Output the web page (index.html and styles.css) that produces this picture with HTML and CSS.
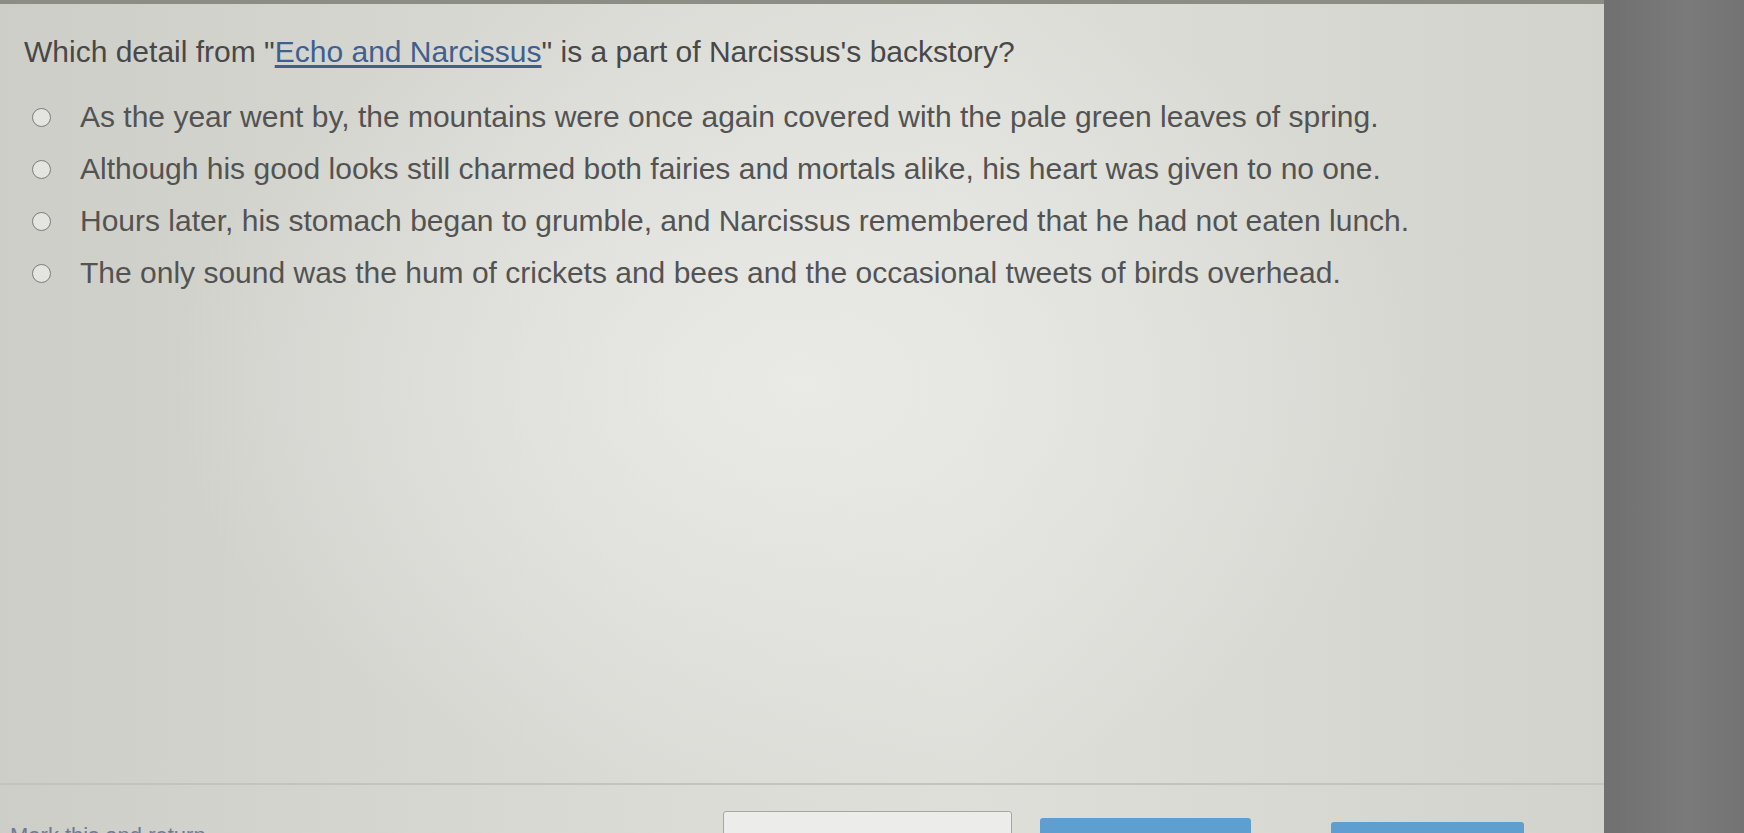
FILE: index.html
```html
<!DOCTYPE html>
<html lang="en">
<head>
<meta charset="utf-8">
<title>Question</title>
<link rel="stylesheet" href="styles.css">
</head>
<body>
<div class="screen">
  <main class="page">
    <section class="question">
      <h1 class="prompt">Which detail from "<a class="story-link" href="#">Echo and Narcissus</a>" is a part of Narcissus's backstory?</h1>
      <ul class="options">
        <li class="option"><span class="radio"></span><span class="option-text">As the year went by, the mountains were once again covered with the pale green leaves of spring.</span></li>
        <li class="option"><span class="radio"></span><span class="option-text">Although his good looks still charmed both fairies and mortals alike, his heart was given to no one.</span></li>
        <li class="option"><span class="radio"></span><span class="option-text">Hours later, his stomach began to grumble, and Narcissus remembered that he had not eaten lunch.</span></li>
        <li class="option"><span class="radio"></span><span class="option-text">The only sound was the hum of crickets and bees and the occasional tweets of birds overhead.</span></li>
      </ul>
    </section>
    <footer class="footer">
      <span class="mark">Mark this and return</span>
      <div class="buttons">
        <button class="btn btn-outline" aria-label="Save and Exit"></button>
        <button class="btn btn-blue" aria-label="Next"></button>
        <button class="btn btn-blue btn-last" aria-label="Submit"></button>
      </div>
    </footer>
  </main>
  <aside class="side"></aside>
</div>
</body>
</html>
```

FILE: styles.css
```css
html, body {
  margin: 0;
  padding: 0;
  height: 100%;
  overflow: hidden;
}
body {
  background: #747474;
  font-family: "Liberation Sans", Arial, sans-serif;
}
.screen {
  display: flex;
  height: 833px;
}
.page {
  width: 1604px;
  flex: none;
  display: flex;
  flex-direction: column;
  border-top: 4px solid #8c8d85;
  box-sizing: border-box;
  background:
    radial-gradient(ellipse 900px 600px at 800px 380px, rgba(236,237,233,0.85), rgba(236,237,233,0) 70%),
    linear-gradient(90deg, #cdcec7 0%, #dadbd5 40%, #dedfd9 60%, #d2d3cc 100%);
}
.side {
  flex: 1;
  background: linear-gradient(90deg, #707070, #7a7a7a 60%, #737373);
}
.question {
  flex: 1;
  padding: 30px 0 0 24px;
}
.prompt {
  margin: 0 0 29px;
  font-size: 30px;
  font-weight: normal;
  color: #484848;
  line-height: 36px;
}
.story-link {
  color: #3f5f8f;
  text-decoration: underline;
  text-underline-offset: 3px;
}
.options {
  list-style: none;
  margin: 0;
  padding: 0;
  display: flex;
  flex-direction: column;
  gap: 16px;
}
.option {
  display: flex;
  align-items: center;
  gap: 29px;
  height: 36px;
  padding-left: 8px;
}
.radio {
  width: 19px;
  height: 19px;
  border: 1.5px solid #7b7c78;
  border-radius: 50%;
  background: #e4e5e0;
  box-sizing: border-box;
  flex: none;
}
.option-text {
  font-size: 30px;
  color: #535353;
  line-height: 36px;
}
.footer {
  height: 48px;
  border-top: 2px solid #c3c4bd;
  display: flex;
  align-items: flex-end;
  position: relative;
  padding-left: 10px;
}
.mark {
  font-size: 22px;
  color: #6f7a92;
  line-height: 22px;
  margin-bottom: -14px;
}
.buttons {
  position: absolute;
  left: 723px;
  top: 26px;
  display: flex;
  gap: 28px;
  align-items: flex-start;
}
.btn {
  height: 40px;
  border-radius: 3px;
  padding: 0;
}
.btn-outline {
  width: 289px;
  background: #ecedea;
  border: 1.5px solid #a6a7a2;
}
.btn-blue {
  width: 211px;
  margin-top: 7px;
  background: #5f9fcf;
  border: none;
}
.btn-last {
  width: 193px;
  margin-left: 52px;
  margin-top: 11px;
}
```
